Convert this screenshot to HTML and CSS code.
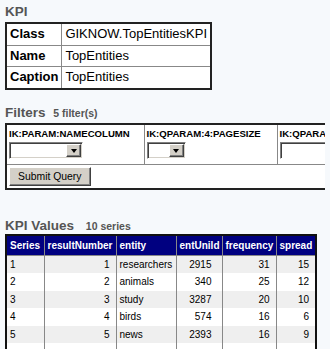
FILE: index.html
```html
<!DOCTYPE html>
<html lang="en">
<head>
    <meta charset="UTF-8">
    <title>KPI TopEntities</title>
    <link rel="stylesheet" href="styles.css">
</head>
<body>
    <h2 class="section-title">KPI</h2>
    <table class="kpi-table">
        <tr><th>Class</th><td>GIKNOW.TopEntitiesKPI</td></tr>
        <tr><th>Name</th><td>TopEntities</td></tr>
        <tr><th>Caption</th><td>TopEntities</td></tr>
    </table>

    <h2 class="section-title filters-title">Filters <small>5 filter(s)</small></h2>
    <div class="filters-wrap">
        <table class="filters-table">
            <colgroup>
                <col class="fcol-1">
                <col class="fcol-2">
                <col class="fcol-3">
            </colgroup>
            <tr>
                <td>
                    <div class="filter-name">IK:PARAM:NAMECOLUMN</div>
                    <span class="combo combo-wide"><select></select><span class="combo-btn"></span></span>
                </td>
                <td>
                    <div class="filter-name">IK:QPARAM:4:PAGESIZE</div>
                    <span class="combo combo-small"><select></select><span class="combo-btn"></span></span>
                </td>
                <td>
                    <div class="filter-name">IK:QPARAM:5:PAGEFROM</div>
                    <input class="text-box" type="text">
                </td>
            </tr>
            <tr>
                <td colspan="3" class="submit-cell"><button class="submit-btn">Submit Query</button></td>
            </tr>
        </table>
    </div>

    <h2 class="section-title values-title">KPI Values <small>10 series</small></h2>
    <table class="data-table">
        <colgroup>
            <col class="c-series">
            <col class="c-result">
            <col class="c-entity">
            <col class="c-unild">
            <col class="c-freq">
            <col class="c-spread">
        </colgroup>
        <thead>
            <tr>
                <th>Series</th><th>resultNumber</th><th>entity</th><th>entUnild</th><th>frequency</th><th>spread</th>
            </tr>
        </thead>
        <tbody>
            <tr><td>1</td><td class="num">1</td><td>researchers</td><td class="num unild">2915</td><td class="num">31</td><td class="num">15</td></tr>
            <tr><td>2</td><td class="num">2</td><td>animals</td><td class="num unild">340</td><td class="num">25</td><td class="num">12</td></tr>
            <tr><td>3</td><td class="num">3</td><td>study</td><td class="num unild">3287</td><td class="num">20</td><td class="num">10</td></tr>
            <tr><td>4</td><td class="num">4</td><td>birds</td><td class="num unild">574</td><td class="num">16</td><td class="num">6</td></tr>
            <tr><td>5</td><td class="num">5</td><td>news</td><td class="num unild">2393</td><td class="num">16</td><td class="num">9</td></tr>
            <tr><td>&nbsp;</td><td></td><td></td><td></td><td></td><td></td></tr>
        </tbody>
    </table>
</body>
</html>
```

FILE: styles.css
```css
html, body {
    overflow: hidden;
}

body {
    margin: 0;
    padding: 4px 5px;
    background-color: #f6f9fc;
    color: #000;
    font-family: "Liberation Sans", Arial, sans-serif;
}

.section-title {
    margin: 0 0 3px;
    font-size: 13.5px;
    line-height: 15px;
    font-weight: bold;
    color: #555;
}

.section-title small {
    font-size: 10.5px;
    margin-left: 4px;
}

.filters-title {
    margin-top: 15px;
    margin-bottom: 2px;
}

.values-title {
    margin-top: 28px;
    margin-bottom: 0;
}

.values-title small {
    margin-left: 8px;
}

/* KPI description */
.kpi-table {
    border-collapse: collapse;
    border: 2px solid #222;
    background-color: #fff;
    font-size: 13px;
}

.kpi-table th,
.kpi-table td {
    border: 1px solid #888;
    padding: 3px;
    line-height: 14.5px;
    text-align: left;
}

/* filters */
.filters-wrap {
    overflow: hidden;
}

.filters-table {
    border-collapse: collapse;
    border: 2px solid #222;
    background-color: #fff;
    table-layout: fixed;
    width: 520px;
}

.fcol-1 { width: 138px; }
.fcol-2 { width: 133px; }

.filters-table td {
    border: 1px solid #888;
    padding: 3px 2px 4px;
    vertical-align: top;
}

.filter-name {
    font-size: 9.6px;
    font-weight: bold;
    line-height: 12px;
    white-space: nowrap;
    margin-bottom: 2px;
}

.combo {
    display: inline-flex;
    vertical-align: top;
    box-sizing: border-box;
    height: 17px;
    border-top: 1px solid #808080;
    border-left: 1px solid #808080;
    border-right: 1px solid #fff;
    border-bottom: 1px solid #fff;
    box-shadow: inset 1px 1px 0 #404040, inset -1px -1px 0 #d4d0c8;
    background-color: #fff;
    padding: 1px;
}

.combo-wide { width: 74px; }
.combo-small { width: 39px; }

.combo select {
    appearance: none;
    -webkit-appearance: none;
    flex: 1;
    min-width: 0;
    border: none;
    background: transparent;
    padding: 0;
    margin: 0;
}

.combo-btn {
    width: 15px;
    box-sizing: border-box;
    background-color: #d4d0c8;
    border: 1px solid;
    border-color: #fff #404040 #404040 #fff;
    box-shadow: inset -1px -1px 0 #808080;
    display: flex;
    align-items: center;
    justify-content: center;
}

.combo-btn::after {
    content: "";
    border-left: 3.5px solid transparent;
    border-right: 3.5px solid transparent;
    border-top: 4px solid #000;
    margin-top: 1px;
}

.text-box {
    box-sizing: border-box;
    vertical-align: top;
    width: 120px;
    height: 17px;
    margin: 0;
    border-top: 1px solid #808080;
    border-left: 1px solid #808080;
    border-right: 1px solid #fff;
    border-bottom: 1px solid #fff;
    box-shadow: inset 1px 1px 0 #404040;
    background-color: #fff;
}

.filters-table .submit-cell {
    padding: 2px 2px 2px;
}

.submit-btn {
    font-family: inherit;
    font-size: 10.4px;
    height: 19px;
    padding: 0 8px;
    margin: 0;
    color: #000;
    background-color: #d4d0c8;
    border: 1px solid;
    border-color: #fff #404040 #404040 #fff;
    box-shadow: inset -1px -1px 0 #808080;
    display: block;
}

/* KPI values */
.data-table {
    border-collapse: collapse;
    border: 2px solid #111;
    table-layout: fixed;
    width: 311px;
    font-size: 10px;
    background-color: #fff;
}

.c-series { width: 38px; }
.c-result { width: 72px; }
.c-entity { width: 60px; }
.c-unild { width: 46px; }
.c-freq { width: 54px; }
.c-spread { width: 40px; }

.data-table th {
    background-color: #000080;
    color: #fff;
    font-weight: bold;
    text-align: left;
    white-space: nowrap;
    padding: 4px 3px 3px;
    line-height: 12px;
    border: 1px solid #888;
    overflow: hidden;
}

.data-table td {
    padding: 3px;
    line-height: 11.5px;
    border-left: 1px solid #888;
    border-right: 1px solid #888;
    white-space: nowrap;
}

.data-table tbody tr:nth-child(odd) td {
    background-color: #efefef;
}

.data-table td.num {
    text-align: right;
    padding-right: 6px;
}

.data-table td.unild {
    padding-right: 10px;
}
```
